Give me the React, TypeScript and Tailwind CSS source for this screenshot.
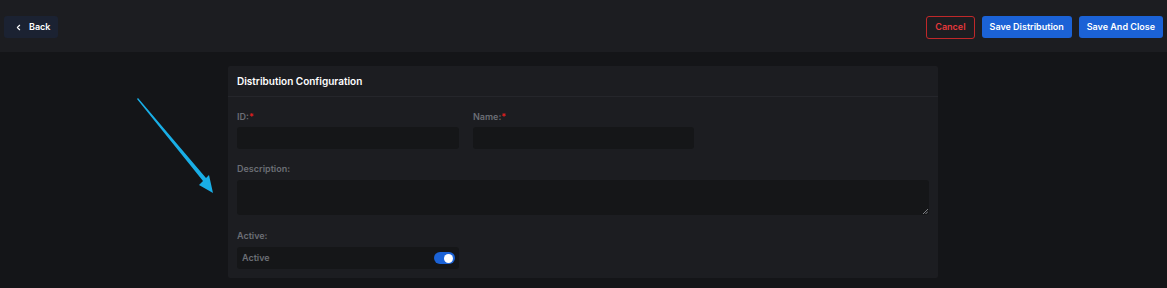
import { ChevronLeft } from "lucide-react"

function Field({ label, required }: { label: string; required?: boolean }) {
  return (
    <div className="flex flex-col">
      <label className="text-[9px] font-semibold text-[#6b6e75] leading-[12px] h-[12px]">
        {label}
        {required && <span className="text-[#e01e1e]">*</span>}
      </label>
      <div className="mt-[4px] h-[22px] rounded-[3px] bg-[#151618]" />
    </div>
  )
}

export default function App() {
  return (
    <div
      className="relative w-[1167px] h-[288px] bg-[#141518] overflow-hidden"
      style={{ fontFamily: "Inter, 'Liberation Sans', sans-serif" }}
    >
      {/* Top bar */}
      <div className="flex h-[52px] items-center justify-between bg-[#1c1d21] px-[4px] pt-[2px]">
        <button className="flex h-[22px] items-center gap-[6px] rounded-[3px] bg-[#1b2232] pl-[10px] pr-[8px] text-[9px] font-semibold text-white">
          <ChevronLeft className="h-[9px] w-[9px]" strokeWidth={3} />
          Back
        </button>
        <div className="flex items-center gap-[7px]">
          <button className="h-[23px] rounded-[3px] border border-[#c0282a] px-[8px] text-[9px] font-semibold text-[#e5383b]">
            Cancel
          </button>
          <button className="h-[22px] rounded-[3px] bg-[#1b62d6] px-[8px] text-[9px] font-semibold text-white">
            Save Distribution
          </button>
          <button className="h-[22px] rounded-[3px] bg-[#1b62d6] px-[8px] text-[9px] font-semibold text-white">
            Save And Close
          </button>
        </div>
      </div>

      {/* Card */}
      <div className="ml-[228px] mt-[14px] w-[710px] rounded-[2px] bg-[#1c1d21] pb-[9px]">
        <div className="flex h-[31px] items-center border-b border-[#25262b] px-[9px] text-[10px] font-semibold text-white">
          Distribution Configuration
        </div>
        <div className="px-[9px] pt-[14px]">
          <div className="grid grid-cols-[222px_221px] gap-[14px]">
            <Field label="ID:" required />
            <Field label="Name:" required />
          </div>
          <div className="mt-[14px]">
            <label className="block text-[9px] font-semibold text-[#6b6e75] leading-[12px]">Description:</label>
            <div className="relative mt-[5px] h-[35px] w-[692px] rounded-[3px] bg-[#151618]">
              <svg className="absolute bottom-[1px] right-[1px]" width="5" height="5" viewBox="0 0 5 5">
                <path d="M0 5 L5 0 M2.5 5 L5 2.5" stroke="#8a8c92" strokeWidth="0.9" />
              </svg>
            </div>
          </div>
          <div className="mt-[15px]">
            <label className="block text-[9px] font-semibold text-[#6b6e75] leading-[12px]">Active:</label>
            <div className="mt-[5px] flex h-[22px] w-[222px] items-center justify-between rounded-[3px] bg-[#151618] pl-[5px] pr-[4px]">
              <span className="text-[9px] font-semibold text-[#6b6e75]">Active</span>
              <div className="flex h-[12px] w-[21px] items-center justify-end rounded-full bg-[#1b62d6] pr-[2px]">
                <div className="h-[9px] w-[9px] rounded-full bg-white" />
              </div>
            </div>
          </div>
        </div>
      </div>

      {/* Annotation arrow */}
      <svg className="absolute left-0 top-0" width="1167" height="288" viewBox="0 0 1167 288">
        <polygon
          points="137,99 138,98 206,178 209,175 213,193 199,185 203,181"
          fill="#19aee6"
        />
      </svg>
    </div>
  )
}
